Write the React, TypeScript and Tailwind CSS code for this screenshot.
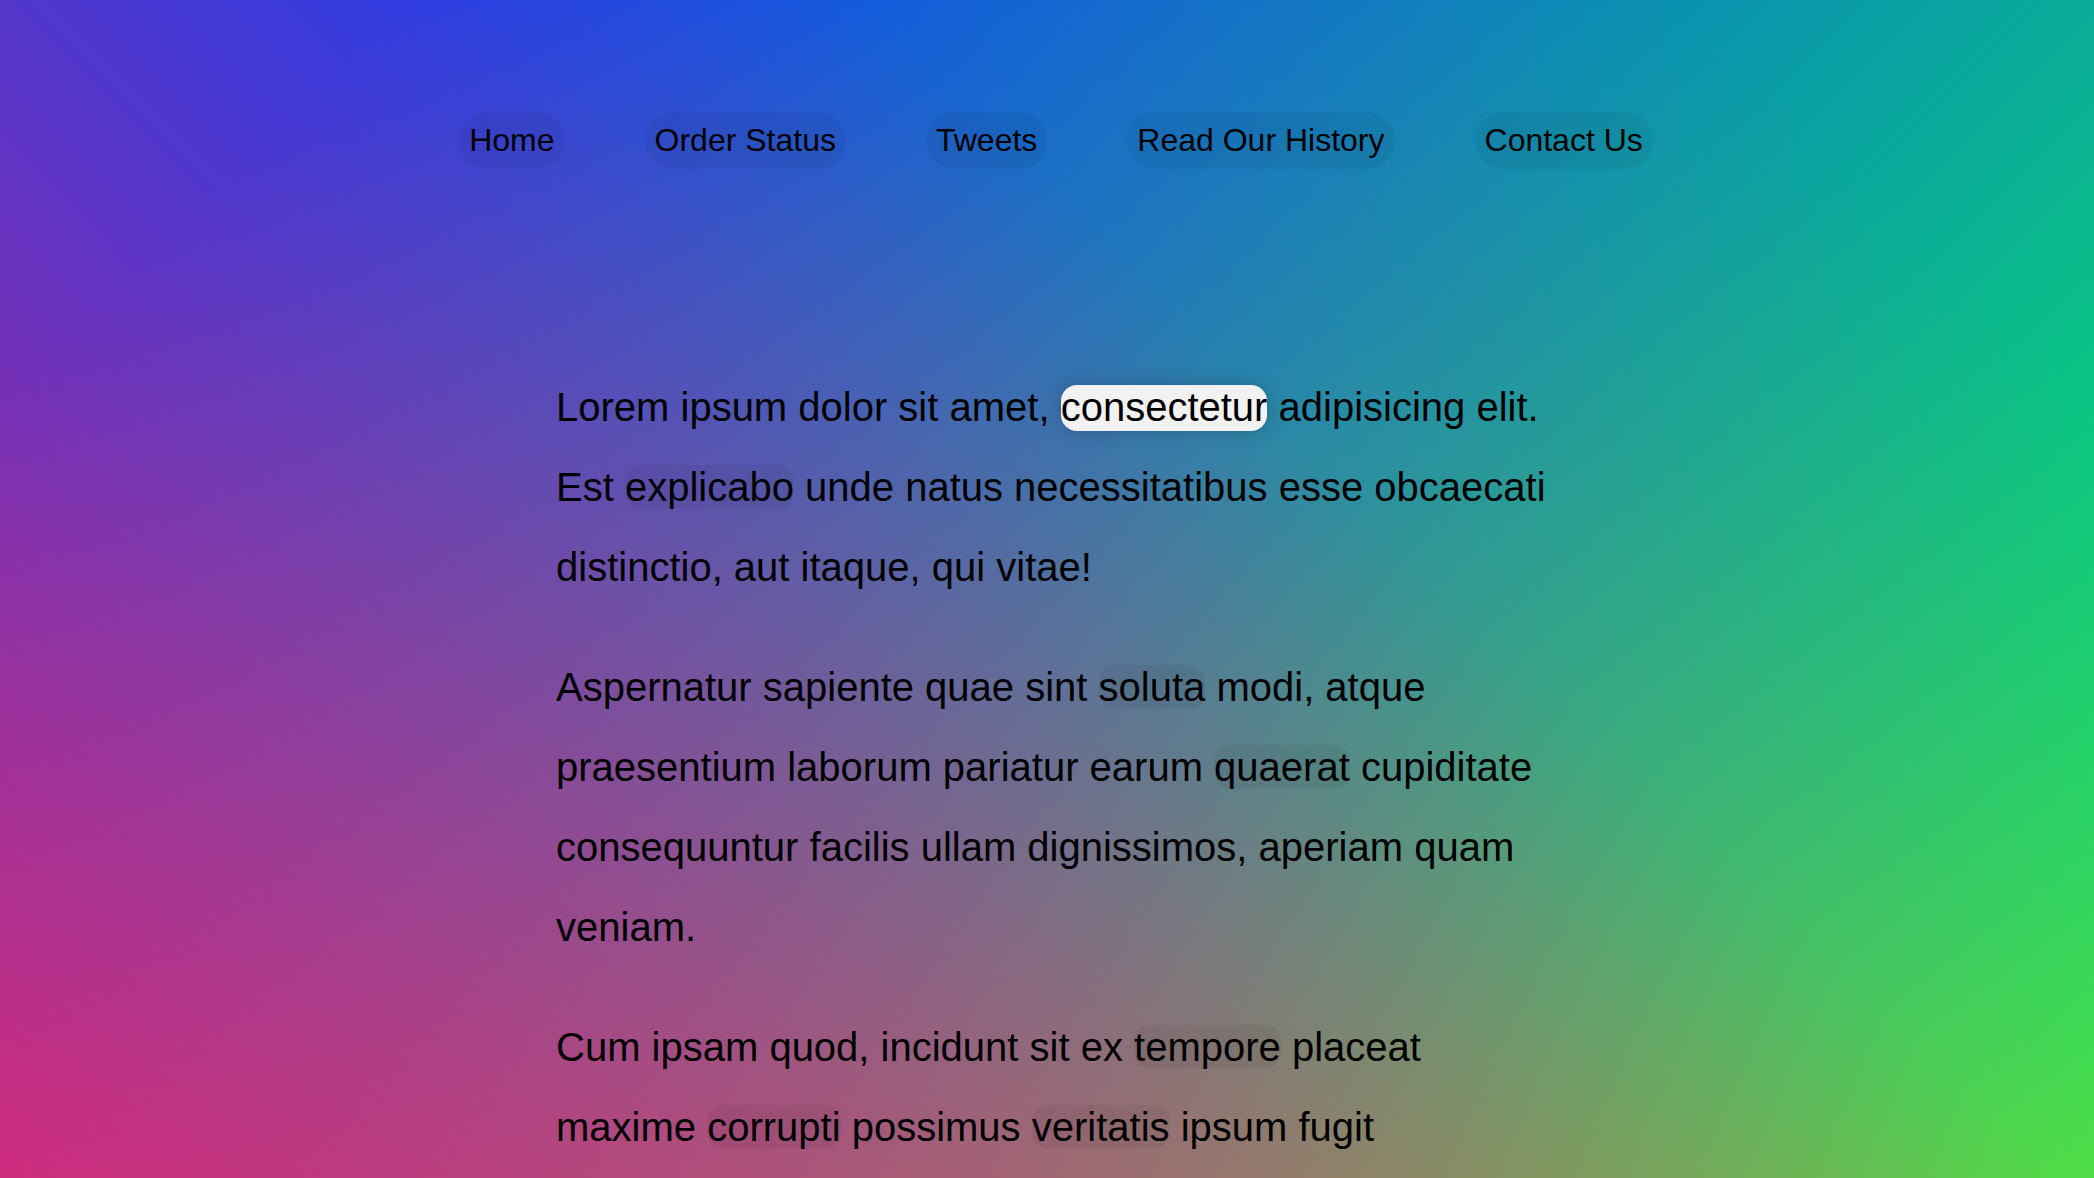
import React from "react";

const navItems = ["Home", "Order Status", "Tweets", "Read Our History", "Contact Us"];

function L({ children, active = false }: { children: React.ReactNode; active?: boolean }) {
  return active ? (
    <a
      href="#"
      className="text-black no-underline bg-[#f2f2f2] rounded-[16px] pb-[2px] shadow-[0_0_20px_rgba(0,0,0,0.2)]"
    >
      {children}
    </a>
  ) : (
    <a href="#" className="text-black no-underline bg-black/5 rounded-[16px]">
      {children}
    </a>
  );
}

export default function App() {
  return (
    <div className="h-screen w-full overflow-hidden font-['Liberation_Sans',Arial,sans-serif]">
      <div className="min-h-[1950px] w-full pl-[18px] pt-[112px] bg-[linear-gradient(45deg,hsla(340,100%,55%,1)_0%,hsla(340,100%,55%,0)_70%),linear-gradient(135deg,hsla(225,95%,50%,1)_10%,hsla(225,95%,50%,0)_80%),linear-gradient(225deg,hsla(140,90%,50%,1)_10%,hsla(140,90%,50%,0)_80%),linear-gradient(315deg,hsla(35,95%,55%,1)_100%,hsla(35,95%,55%,0)_70%)]">
        <nav>
          <ul className="m-0 p-0 list-none flex justify-center">
            {navItems.map((item) => (
              <li key={item} className="flex">
                <a
                  href="#"
                  className="inline-block mx-[40px] p-[10px] text-[32px] leading-[normal] text-black no-underline bg-black/5 rounded-[28px]"
                >
                  {item}
                </a>
              </li>
            ))}
          </ul>
        </nav>
        <div className="mx-auto mt-[198px] max-w-[1000px] text-[40px] leading-[80px] text-black">
          <p className="mb-[40px]">
            Lorem ipsum dolor sit amet, <L active>consectetur</L> adipisicing elit. Est <L>explicabo</L> unde natus
            necessitatibus esse obcaecati distinctio, aut itaque, qui vitae!
          </p>
          <p className="mb-[40px]">
            Aspernatur sapiente quae sint <L>soluta</L> modi, atque praesentium laborum pariatur earum <L>quaerat</L>{" "}
            cupiditate consequuntur facilis ullam dignissimos, aperiam quam veniam.
          </p>
          <p className="mb-[40px]">
            Cum ipsam quod, incidunt sit ex <L>tempore</L> placeat maxime <L>corrupti</L> possimus <L>veritatis</L> ipsum
            fugit recusandae est doloremque? Hic, <L>quibusdam</L>, nulla.
          </p>
          <p className="mb-[40px]">
            Esse quibusdam, ad, ducimus cupiditate <L>nulla</L>, quae magni odit <L>totam</L> ut consequatur eveniet sunt
            quam provident sapiente dicta neque quod.
          </p>
          <p className="mb-[40px]">
            Aliquam <L>dicta</L> sequi culpa fugiat <L>consequuntur</L> pariatur optio ad minima, maxime <L>odio</L>,
            distinctio magni impedit tempore enim repellendus <L>repudiandae</L> quas!
          </p>
        </div>
      </div>
    </div>
  );
}
